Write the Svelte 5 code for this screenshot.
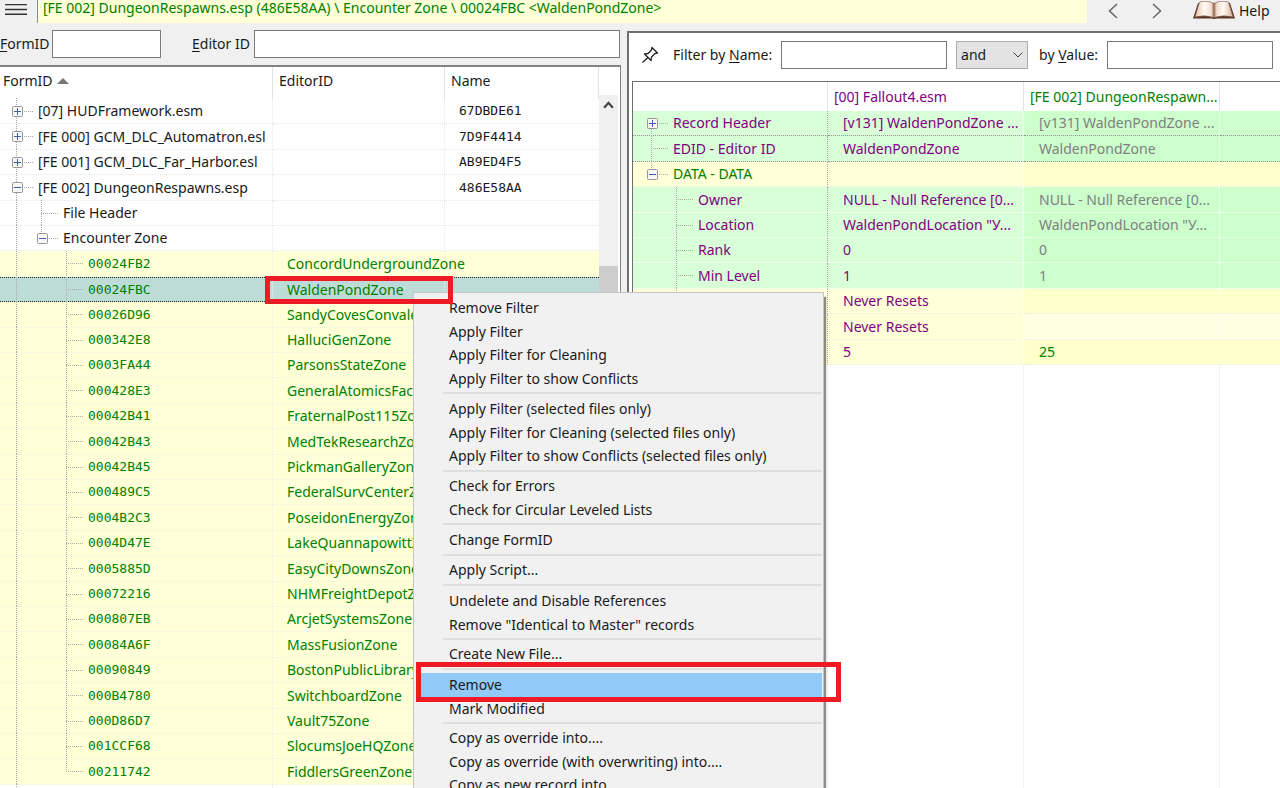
<script>
  const files = [
    ['[07] HUDFramework.esm', '67DBDE61', 'plus'],
    ['[FE 000] GCM_DLC_Automatron.esl', '7D9F4414', 'plus'],
    ['[FE 001] GCM_DLC_Far_Harbor.esl', 'AB9ED4F5', 'plus'],
    ['[FE 002] DungeonRespawns.esp', '486E58AA', 'minus']
  ];
  const zones = [
    ['00024FB2', 'ConcordUndergroundZone'],
    ['00024FBC', 'WaldenPondZone'],
    ['00026D96', 'SandyCovesConvalescentZone'],
    ['000342E8', 'HalluciGenZone'],
    ['0003FA44', 'ParsonsStateZone'],
    ['000428E3', 'GeneralAtomicsFactoryZone'],
    ['00042B41', 'FraternalPost115Zone'],
    ['00042B43', 'MedTekResearchZone'],
    ['00042B45', 'PickmanGalleryZone'],
    ['000489C5', 'FederalSurvCenterZone'],
    ['0004B2C3', 'PoseidonEnergyZone'],
    ['0004D47E', 'LakeQuannapowittZone'],
    ['0005885D', 'EasyCityDownsZone'],
    ['00072216', 'NHMFreightDepotZone'],
    ['000807EB', 'ArcjetSystemsZone'],
    ['00084A6F', 'MassFusionZone'],
    ['00090849', 'BostonPublicLibraryZone'],
    ['000B4780', 'SwitchboardZone'],
    ['000D86D7', 'Vault75Zone'],
    ['001CCF68', 'SlocumsJoeHQZone'],
    ['00211742', 'FiddlersGreenZone']
  ];

  // guides: one entry per indent level
  const tree = [
    ...files.map(([id, name, box]) => ({ id, name, guides: ['full'], box })),
    { id: 'File Header', guides: ['full', 'tee'] },
    { id: 'Encounter Zone', guides: ['full', 'end'], box: 'minus' },
    ...zones.map(([id, editor], i) => ({
      id,
      editor,
      record: true,
      selected: id === '00024FBC',
      guides: ['full', 'none', i === zones.length - 1 ? 'end' : 'tee']
    })),
    { id: '', guides: ['full'] }
  ];

  const values = [
    { label: 'Record Header', guides: ['start'], box: 'plus', tone: 'green', a: '[v131] WaldenPondZone ...', b: '[v131] WaldenPondZone ...', dark: true },
    { label: 'EDID - Editor ID', guides: ['tee'], tone: 'green', a: 'WaldenPondZone', b: 'WaldenPondZone', dark: true },
    { label: 'DATA - DATA', guides: ['end'], box: 'minus', tone: 'yellow', changed: true },
    { label: 'Owner', guides: ['none', 'tee'], tone: 'green', a: 'NULL - Null Reference [0...', b: 'NULL - Null Reference [0...' },
    { label: 'Location', guides: ['none', 'tee'], tone: 'green', a: 'WaldenPondLocation "У...', b: 'WaldenPondLocation "У...' },
    { label: 'Rank', guides: ['none', 'tee'], tone: 'green', a: '0', b: '0' },
    { label: 'Min Level', guides: ['none', 'tee'], tone: 'green', a: '1', b: '1' },
    { label: 'Flags', guides: ['none', 'tee'], tone: 'yellow', a: 'Never Resets' },
    { label: 'Never Resets', guides: ['none', 'tee'], tone: 'yellow pale', a: 'Never Resets' },
    { label: 'Max Level', guides: ['none', 'end'], tone: 'yellow', a: '5', b: '25', changedValue: true }
  ];

  const menu = [
    ['Remove Filter', 'Apply Filter', 'Apply Filter for Cleaning', 'Apply Filter to show Conflicts'],
    ['Apply Filter (selected files only)', 'Apply Filter for Cleaning (selected files only)', 'Apply Filter to show Conflicts (selected files only)'],
    ['Check for Errors', 'Check for Circular Leveled Lists'],
    ['Change FormID'],
    ['Apply Script...'],
    ['Undelete and Disable References', 'Remove "Identical to Master" records'],
    ['Create New File...'],
    ['Remove', 'Mark Modified'],
    ['Copy as override into....', 'Copy as override (with overwriting) into....', 'Copy as new record into....']
  ];
</script>

{#snippet branch(row)}
  {#each row.guides as g, i}
    <span class="guide {g}" class:stub={i === row.guides.length - 1 && row.id !== ''}>
      {#if row.box && i === row.guides.length - 1}
        <svg class="box" viewBox="0 0 11 11" aria-hidden="true">
          <rect x="0.5" y="0.5" width="10" height="10" rx="1" fill="#f8f8f8" stroke="#969696" />
          <path d={row.box === 'plus' ? 'M2 5.5H9M5.5 2V9' : 'M2 5.5H9'} stroke="#3f5da5" />
        </svg>
      {/if}
    </span>
  {/each}
{/snippet}

<div class="app">
  <header class="top">
    <button class="burger" aria-label="Main menu">
      <svg viewBox="0 0 24 14"><path d="M0 2.5H23M0 7.5H23M0 12.5H23" stroke="#333" stroke-width="1.4" /></svg>
    </button>
    <div class="path">[FE 002] DungeonRespawns.esp (486E58AA) \ Encounter Zone \ 00024FBC &lt;WaldenPondZone&gt;</div>
    <nav>
      <button aria-label="Back"><svg class="arrow" viewBox="0 0 10 16"><path d="M9 1L1.5 8L9 15" /></svg></button>
      <button aria-label="Forward"><svg class="arrow" viewBox="0 0 10 16"><path d="M1 1L8.500 8L1 15" /></svg></button>
      <button class="help">
        <svg class="book" viewBox="0 0 42 18" aria-hidden="true">
          <defs>
            <linearGradient id="pageL" x1="0" x2="1"><stop offset="0" stop-color="#e2c3a8" /><stop offset=".5" stop-color="#fffaf4" /><stop offset=".85" stop-color="#f3dfcf" /><stop offset="1" stop-color="#a97c60" /></linearGradient>
            <linearGradient id="pageR" x1="1" x2="0"><stop offset="0" stop-color="#d9b597" /><stop offset=".5" stop-color="#fffaf4" /><stop offset=".85" stop-color="#f3dfcf" /><stop offset="1" stop-color="#a97c60" /></linearGradient>
          </defs>
          <path d="M5 2L0 17.500H18L21 18L24 17.500H42L37 2Z" fill="#5a3425" />
          <path d="M6.500 1Q15 -1 21 2.500V16.500Q12 13.500 2 16Z" fill="url(#pageL)" stroke="#8a6450" stroke-width=".7" />
          <path d="M35.500 1Q27 -1 21 2.500V16.500Q30 13.500 40 16Z" fill="url(#pageR)" stroke="#8a6450" stroke-width=".7" />
        </svg>
        Help
      </button>
    </nav>
  </header>

  <main>
    <section class="left">
      <div class="search">
        <label for="formid"><u>F</u>ormID</label>
        <input id="formid" class="short" />
        <label for="editorid" class="second"><u>E</u>ditor ID</label>
        <input id="editorid" />
      </div>
      <div class="tree">
        <table>
          <colgroup><col class="c1" /><col class="c2" /><col /></colgroup>
          <thead>
            <tr><th>FormID <span class="sort"></span></th><th>EditorID</th><th>Name</th></tr>
          </thead>
          <tbody>
            {#each tree as row}
              <tr class:record={row.record} class:selected={row.selected}>
                <td><div class="cell">{@render branch(row)}<span class="text" class:mono={row.record}>{row.id}</span></div></td>
                <td><span class="editor">{row.editor ?? ''}</span></td>
                <td><span class="editor mono">{row.name ?? ''}</span></td>
              </tr>
            {/each}
          </tbody>
        </table>
        <div class="scroll">
          <button aria-label="Scroll up"><svg viewBox="0 0 10 7"><path d="M1 6L5 1.500L9 6" fill="none" stroke="#444" stroke-width="2" /></svg></button>
          <div class="thumb"></div>
        </div>
      </div>
    </section>

    <section class="right">
      <div class="filters">
        <button class="pin" aria-label="Pin">
          <svg viewBox="0 0 18 18"><path d="M11 1.500L16.500 7L14 7.500L10.500 11L10 14.500L3.500 8L7 7.500L10.500 4ZM7 11.500L1.500 16.500" fill="none" stroke="#222" stroke-width="1.3" stroke-linejoin="round" /></svg>
        </button>
        <label for="fname">Filter by <u>N</u>ame:</label>
        <input id="fname" />
        <div class="combo">
          <select aria-label="Operator"><option>and</option><option>or</option></select>
          <svg viewBox="0 0 10 6" aria-hidden="true"><path d="M0.500 0.500L5 5L9.500 0.500" fill="none" stroke="#444" /></svg>
        </div>
        <label for="fvalue">by <u>V</u>alue:</label>
        <input id="fvalue" />
      </div>
      <div class="grid">
        <table>
          <colgroup><col class="v1" /><col class="v2" /><col class="v2" /><col /></colgroup>
          <thead>
            <tr><th></th><th class="purple">[00] Fallout4.esm</th><th class="green-text">[FE 002] DungeonRespawn...</th><th></th></tr>
          </thead>
          <tbody>
            {#each values as row}
              <tr class={row.tone} class:dark={row.dark}>
                <td class:green-text={row.changed}><div class="cell">{@render branch(row)}<span class="text">{row.label}</span></div></td>
                <td><span class="value">{row.a ?? ''}</span></td>
                <td class="own" class:green-text={row.changedValue}><span class="value">{row.b ?? ''}</span></td>
                <td class="own"></td>
              </tr>
            {/each}
            <tr class="rest"><td></td><td></td><td></td><td></td></tr>
          </tbody>
        </table>
      </div>
    </section>
  </main>

  <div class="menu" role="menu">
    {#each menu as group}
      <div class="group">
        {#each group as item}
          <button role="menuitem" class:active={item === 'Remove'}>{item}</button>
        {/each}
      </div>
    {/each}
  </div>

  <div class="mark mark-record"></div>
  <div class="mark mark-remove"></div>
</div>

<style>
  :global(body) { margin: 0; overflow: hidden; }
  .app {
    position: relative;
    display: flex;
    flex-direction: column;
    height: 100vh;
    overflow: hidden;
    background: #f0f0f0;
    color: #1a1a1a;
    font: 14px/20px "Noto Sans", "Open Sans", sans-serif;
  }
  button { border: 0; padding: 0; background: none; font: inherit; color: inherit; }
  svg { display: block; }
  input { box-sizing: border-box; height: 28px; min-width: 0; border: 1px solid #7a7a7a; background: #fff; font: inherit; }
  u { text-underline-offset: 2px; }

  .top { display: flex; height: 30px; align-items: flex-start; }
  .burger { width: 37px; padding: 2px 0 0 5px; }
  .burger svg { width: 23px; height: 14px; }
  .path { flex: 1; height: 23px; box-sizing: border-box; padding-left: 5px; border-left: 1px solid #8a8a8a; background: #ffffd8; color: #008000; line-height: 16px; white-space: nowrap; }
  nav { display: flex; width: 193px; }
  nav button { height: 20px; padding: 1px 0 0 21px; }
  nav button + button { padding-left: 34px; }
  .arrow { width: 10px; height: 16px; fill: none; stroke: #666; stroke-width: 1.5; }
  nav .help { display: flex; gap: 4px; padding-left: 31px; }
  .book { width: 42px; height: 18px; }

  main { flex: 1; min-height: 0; display: grid; grid-template-columns: 621fr 653fr; gap: 6px; }
  section { min-width: 0; min-height: 0; display: flex; flex-direction: column; }

  .search { display: flex; align-items: center; height: 28px; margin-bottom: 7px; }
  .search label { width: 52px; }
  .search .short { width: 109px; }
  .search .second { width: 62px; margin-left: 31px; }
  #editorid { flex: 1; margin-right: 1px; }

  .tree { flex: 1; min-height: 0; display: flex; overflow: hidden; border: solid #828282; border-width: 2px 1px 0 0; background: #fff; }
  table { border-collapse: separate; border-spacing: 0; table-layout: fixed; width: 100%; }
  th, td { padding: 0; font-weight: normal; text-align: left; white-space: nowrap; }
  .tree table { flex: 1; min-width: 0; height: max-content; }
  .tree th { height: 32px; box-sizing: border-box; padding: 0 0 4px 6px; border-right: 1px solid #e2e2e2; }
  .tree th:first-child { padding-left: 3px; }
  .c1 { width: 273px; }
  .c2 { width: 172px; }
  .sort { display: inline-block; margin: 0 0 2px 1px; border: solid transparent; border-width: 0 6px 6px; border-bottom-color: #777; }

  tbody tr { height: 25px; }
  tbody tr:nth-child(5n + 2), tbody tr:nth-child(5n + 4) { height: 26px; }
  tbody td { height: inherit; box-sizing: border-box; border: dotted #e8e8e8; border-width: 0 1px 1px 0; }
  .tree td:last-child { border-right: 0; }
  .record { background: #ffffd8; color: #008000; }
  .record td { border-color: #f0f0e6; }
  .selected { background: #bddcd8; }
  .selected td { border-top: 1px dotted #222; border-bottom-color: #222; }
  .cell { display: flex; align-items: center; height: 24px; padding-left: 4px; }
  .selected .cell, .selected .editor { height: 23px; line-height: 23px; }
  .editor { display: block; padding-left: 14px; height: 24px; line-height: 24px; }
  .mono { font-family: "DejaVu Sans Mono", "Liberation Mono", monospace; font-size: 13px; }
  .text { padding-left: 4px; line-height: 24px; }

  .guide {
    --v: repeating-linear-gradient(#a8a8a8 0 1px, transparent 1px 2px);
    --h: repeating-linear-gradient(90deg, #a8a8a8 0 1px, transparent 1px 2px);
    flex: none;
    display: flex;
    align-items: center;
    width: 25px;
    height: 26px;
    background: var(--v) 12px 0 / 1px 100% no-repeat;
  }
  .guide.none { background: none; }
  .guide.stub { width: 30px; background: var(--v) 12px 0 / 1px 100% no-repeat, var(--h) 12px 50% / 18px 1px no-repeat; }
  .guide.stub.end { background: var(--v) 12px 0 / 1px 50% no-repeat, var(--h) 12px 50% / 18px 1px no-repeat; }
  .guide.stub.start { background: var(--v) 12px 100% / 1px 50% no-repeat, var(--h) 12px 50% / 18px 1px no-repeat; }
  .box { width: 11px; height: 11px; margin-left: 8px; }

  .scroll { width: 21px; padding-top: 28px; display: flex; flex-direction: column; }
  .scroll button { height: 20px; display: grid; place-items: center; margin-right: 2px; background: #f0f0f0; }
  .scroll svg { width: 11px; height: 8px; }
  .thumb { flex: 1; margin-right: 2px; border-top: 151px solid #f0f0f0; background: #cdcdcd; }

  .right { margin-top: 1px; border: solid #6e6e6e; border-width: 2px 0 0 2px; background: #fff; }
  .filters { display: flex; align-items: center; height: 28px; padding: 8px 7px 12px 12px; }
  .filters input { flex: 1 1 0; }
  .pin { width: 32px; }
  .pin svg { width: 18px; height: 18px; }
  .filters label { white-space: nowrap; margin-right: 9px; }
  .combo { position: relative; width: 72px; height: 28px; margin: 0 11px 0 9px; }
  .combo select { appearance: none; width: 100%; height: 100%; padding: 0 4px; border: 1px solid #adadad; border-radius: 0; background: #e3e3e3; font: inherit; color: inherit; }
  .combo svg { position: absolute; right: 5px; top: 11px; width: 10px; height: 6px; pointer-events: none; }

  .grid { flex: 1; min-height: 0; margin-left: 3px; overflow: hidden; border: solid #6e6e6e; border-width: 1px 0 0 1px; }
  .grid table { height: 100%; }
  .grid th { height: 29px; box-sizing: border-box; padding: 0 0 0 6px; border-right: 1px solid #e4e4e4; }
  .v1 { width: 195px; }
  .v2 { width: 196px; }
  .grid td { border-color: #fff; }
  .grid td:first-child { border-right-color: #a4a4a4; }
  .grid .dark td { border-bottom-color: #8f8f8f; }
  .grid td:last-child, .grid th:last-child { border-right: 0; }
  .grid tbody { color: #800080; }
  .green td { background: #d8ffd8; }
  .green .own { background: #ccffcc; }
  .yellow td { background: #ffffd8; }
  .yellow .own { background: #ffffcc; }
  .pale .own { background: #ffffe4; }
  .grid .yellow td { border-bottom-color: #ececec; }
  .own { color: #808080; }
  .grid .cell { padding-left: 6px; }
  .value { display: block; padding-left: 15px; line-height: 24px; }
  .purple { color: #800080; }
  .green-text, .own.green-text { color: #008000; }
  tbody .rest { height: auto; }
  .grid .rest td { border-bottom: 0; border-right: 1px solid #f2f2f2; }
  .grid .rest td:last-child { border-right: 0; }

  .menu { position: absolute; left: 413px; top: 292px; width: 411px; box-sizing: border-box; padding: 3px 1px 3px 7px; border: 1px solid #c4c4c4; background: #f1f1f1; box-shadow: 2px 5px 1px rgba(0, 0, 0, .45); }
  .group + .group { border: solid transparent; border-width: 2px 0 0; border-image: linear-gradient(90deg, transparent 24px, #dedede 24px) 2; padding-top: 3px; margin-top: 2px; }
  .group:nth-child(odd) { padding-top: 2px; }
  .group:first-child { padding-top: 0; }
  .menu button { display: block; width: 100%; height: 24px; padding-left: 28px; text-align: left; line-height: 22px; white-space: nowrap; }
  .menu button:nth-child(even) { height: 23px; }
  .menu .active { background: #91c9f7; }

  .mark { position: absolute; box-sizing: border-box; border: 5px solid #ed1c24; pointer-events: none; }
  .mark-record { left: 265px; top: 276px; width: 188px; height: 28px; }
  .mark-remove { left: 416px; top: 662px; width: 425px; height: 40px; }
</style>
